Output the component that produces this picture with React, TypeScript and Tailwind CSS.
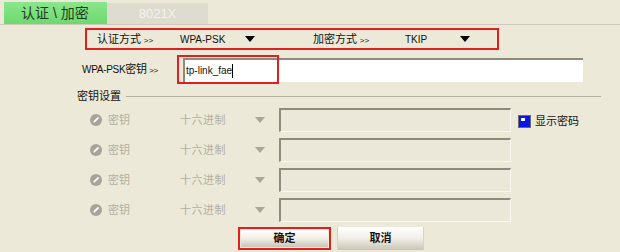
const font = "font-['Liberation_Sans','Noto_Sans_CJK_SC',sans-serif]";

const Tri = ({ color = "#000" }: { color?: string }) => (
  <svg width="10" height="6" viewBox="0 0 10 6">
    <path d="M0 0h10L5 6z" fill={color} />
  </svg>
);

const Radio = () => (
  <svg width="12" height="12" viewBox="0 0 12 12">
    <circle cx="6" cy="6" r="6" fill="#a7a396" />
    <path d="M4.3 7.7L8 4" stroke="#ffffff" strokeWidth="1.8" strokeLinecap="round" />
  </svg>
);

const KeyRow = ({ showCheck }: { showCheck?: boolean }) => (
  <div className="flex items-center h-[24px]">
    <div className="ml-[90px] flex items-center">
      <Radio />
    </div>
    <span className="ml-[6px] w-[72px] text-[11px] text-[#b3afa2]">密钥</span>
    <span className="w-[75px] text-[11px] tracking-[0.5px] text-[#b3afa2]">十六进制</span>
    <Tri color="#aaa69a" />
    <div className="ml-[14px] w-[232px] h-[24px] bg-[#ebe8d9] border-t-2 border-l-2 border-b border-r border-t-[#8f8b7c] border-l-[#8f8b7c] border-b-[#f7f6f0] border-r-[#f7f6f0]" />
    {showCheck && (
      <div className="ml-[7px] flex items-center gap-[4px] self-start mt-[5px]">
        <div className="w-[13px] h-[13px] border border-[#6b6b6b] bg-[#0a16e6] relative">
          <div className="absolute left-[2px] top-[2px] w-[4px] h-[3px] bg-white" />
        </div>
        <span className="text-[11px] text-[#111]">显示密码</span>
      </div>
    )}
  </div>
);

export default function App() {
  return (
    <div className={`w-[620px] h-[252px] bg-[#ece9d8] overflow-hidden ${font}`}>
      {/* tabs */}
      <div className="flex items-end pt-[3px] pl-[4px] h-[25px] border-b border-[#cfcbbb]">
        <div className="w-[103px] h-[22px] bg-gradient-to-b from-[#8ae68a] to-[#6ed86e] flex items-center pl-[17px] text-[14px] text-[#1f3b1f]">
          认证 \ 加密
        </div>
        <div className="w-[101px] h-[21px] bg-[#dedbcf] flex items-center justify-center text-[13px] text-[#f4f3ee]">
          8021X
        </div>
      </div>

      {/* auth / encryption */}
      <div className="ml-[85px] mt-[3px] w-[414px] h-[22px] border-2 border-[#e02020] flex items-center text-[10px] text-[#111]">
        <span className="ml-[10px] w-[83px]">
          <span className="text-[11px]">认证方式</span> <span className="text-[8px]">&gt;&gt;</span>
        </span>
        <span className="w-[65px]">WPA-PSK</span>
        <Tri />
        <span className="ml-[58px] w-[92px]">
          <span className="text-[11px]">加密方式</span> <span className="text-[8px]">&gt;&gt;</span>
        </span>
        <span className="w-[55px]">TKIP</span>
        <Tri />
      </div>

      {/* psk key */}
      <div className="relative flex items-center h-[29px] mt-[5px]">
        <span className="ml-[82px] w-[101px] text-[10px] tracking-[-0.3px] text-[#111]">
          WPA-PSK<span className="text-[11px]">密钥</span> <span className="text-[8px]">&gt;&gt;</span>
        </span>
        <div className="w-[400px] h-[24px] bg-white border-t-2 border-l-2 border-[#8f8b7c] flex items-center pl-[1px] text-[10px] text-[#111]">
          tp-link_fae<span className="w-px h-[14px] bg-black" />
        </div>
        <div className="absolute left-[177px] top-0 w-[102px] h-[29px] border-2 border-[#e02020]" />
      </div>

      {/* key settings */}
      <div className="flex items-center mt-[5px] h-[14px]">
        <span className="ml-[77px] text-[11px] text-[#111]">密钥设置</span>
        <div className="ml-[5px] w-[475px] h-px bg-[#b5b1a2]" />
      </div>
      <div className="flex flex-col gap-[6px] mt-[5px]">
        <KeyRow showCheck />
        <KeyRow />
        <KeyRow />
        <KeyRow />
      </div>

      {/* buttons */}
      <div className="flex mt-[5px] ml-[238px] gap-[6px]">
        <div className="w-[93px] h-[23px] border-2 border-[#e02020] p-px">
          <div className="w-full h-full bg-gradient-to-b from-[#ffffff] via-[#f0eee6] to-[#c9c5b6] flex items-center justify-center text-[11px] font-bold text-[#111]">
            确定
          </div>
        </div>
        <div className="w-[87px] h-[23px] bg-gradient-to-b from-[#ffffff] via-[#f0eee6] to-[#c9c5b6] border-x border-[#d6d2c4] flex items-center justify-center text-[11px] font-bold text-[#111]">
          取消
        </div>
      </div>
    </div>
  );
}
